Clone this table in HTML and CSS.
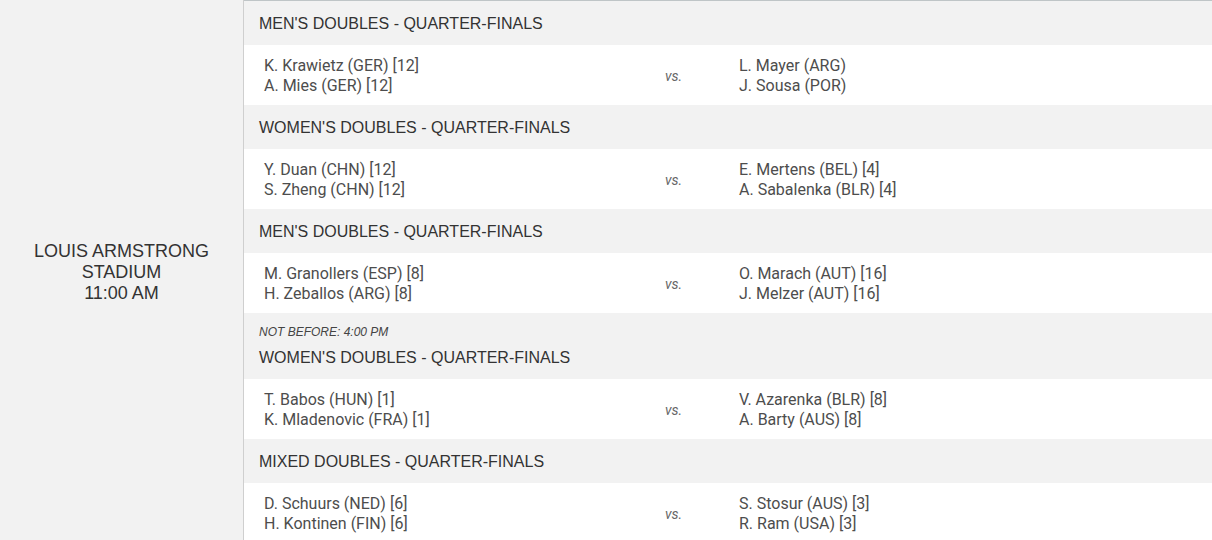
FILE: index.html
```html
<!DOCTYPE html>
<html>
<head>
<meta charset="utf-8">
<link rel="stylesheet" href="styles.css">
</head>
<body>
<div class="schedule">
  <div class="court">
    <div class="court-name">LOUIS ARMSTRONG<br>STADIUM<br>11:00 AM</div>
  </div>
  <div class="matches">
    <div class="event"><div class="event-title">MEN'S DOUBLES - QUARTER-FINALS</div></div>
    <div class="match">
      <div class="team">K. Krawietz (GER) [12]<br>A. Mies (GER) [12]</div>
      <div class="vs">vs.</div>
      <div class="team">L. Mayer (ARG)<br>J. Sousa (POR)</div>
    </div>
    <div class="event"><div class="event-title">WOMEN'S DOUBLES - QUARTER-FINALS</div></div>
    <div class="match">
      <div class="team">Y. Duan (CHN) [12]<br>S. Zheng (CHN) [12]</div>
      <div class="vs">vs.</div>
      <div class="team">E. Mertens (BEL) [4]<br>A. Sabalenka (BLR) [4]</div>
    </div>
    <div class="event"><div class="event-title">MEN'S DOUBLES - QUARTER-FINALS</div></div>
    <div class="match">
      <div class="team">M. Granollers (ESP) [8]<br>H. Zeballos (ARG) [8]</div>
      <div class="vs">vs.</div>
      <div class="team">O. Marach (AUT) [16]<br>J. Melzer (AUT) [16]</div>
    </div>
    <div class="event event-note">
      <div class="note">NOT BEFORE: 4:00 PM</div>
      <div class="event-title">WOMEN'S DOUBLES - QUARTER-FINALS</div>
    </div>
    <div class="match">
      <div class="team">T. Babos (HUN) [1]<br>K. Mladenovic (FRA) [1]</div>
      <div class="vs">vs.</div>
      <div class="team">V. Azarenka (BLR) [8]<br>A. Barty (AUS) [8]</div>
    </div>
    <div class="event"><div class="event-title">MIXED DOUBLES - QUARTER-FINALS</div></div>
    <div class="match">
      <div class="team">D. Schuurs (NED) [6]<br>H. Kontinen (FIN) [6]</div>
      <div class="vs">vs.</div>
      <div class="team">S. Stosur (AUS) [3]<br>R. Ram (USA) [3]</div>
    </div>
  </div>
</div>
</body>
</html>
```
FILE: styles.css
```css
html, body {
  margin: 0;
  padding: 0;
  background: #ffffff;
}
.schedule {
  display: flex;
  width: 1212px;
  font-family: "Liberation Sans", Arial, sans-serif;
}
.court {
  width: 244px;
  flex: none;
  background: #f2f2f2;
  border-right: 1px solid #cfcfcf;
  display: flex;
  align-items: center;
  justify-content: center;
  padding-top: 2px;
  box-sizing: border-box;
}
.court-name {
  text-align: center;
  font-size: 18px;
  line-height: 21px;
  color: #333333;
}
.matches {
  flex: 1;
  border-top: 1px solid #bfc5c7;
}
.event {
  background: #f2f2f2;
  height: 44px;
  display: flex;
  flex-direction: column;
  justify-content: center;
  padding-left: 15px;
  padding-top: 1px;
  box-sizing: border-box;
}
.event-note {
  height: 66px;
  justify-content: flex-start;
  padding-top: 13px;
}
.note {
  font-size: 12px;
  font-style: italic;
  color: #444444;
  line-height: 13px;
  margin-bottom: 9px;
}
.event-title {
  font-size: 16px;
  color: #333333;
  line-height: 20px;
}
.match {
  height: 60px;
  display: grid;
  grid-template-columns: 401px 74px 1fr;
  align-items: center;
  padding-left: 20px;
  padding-top: 1px;
  box-sizing: border-box;
  background: #ffffff;
}
.team {
  font-family: Roboto, "Liberation Sans", sans-serif;
  font-size: 16px;
  line-height: 20px;
  color: #4d4d4d;
}
.vs {
  font-family: Roboto, "Liberation Sans", sans-serif;
  font-style: italic;
  font-size: 14px;
  color: #666666;
}
```
